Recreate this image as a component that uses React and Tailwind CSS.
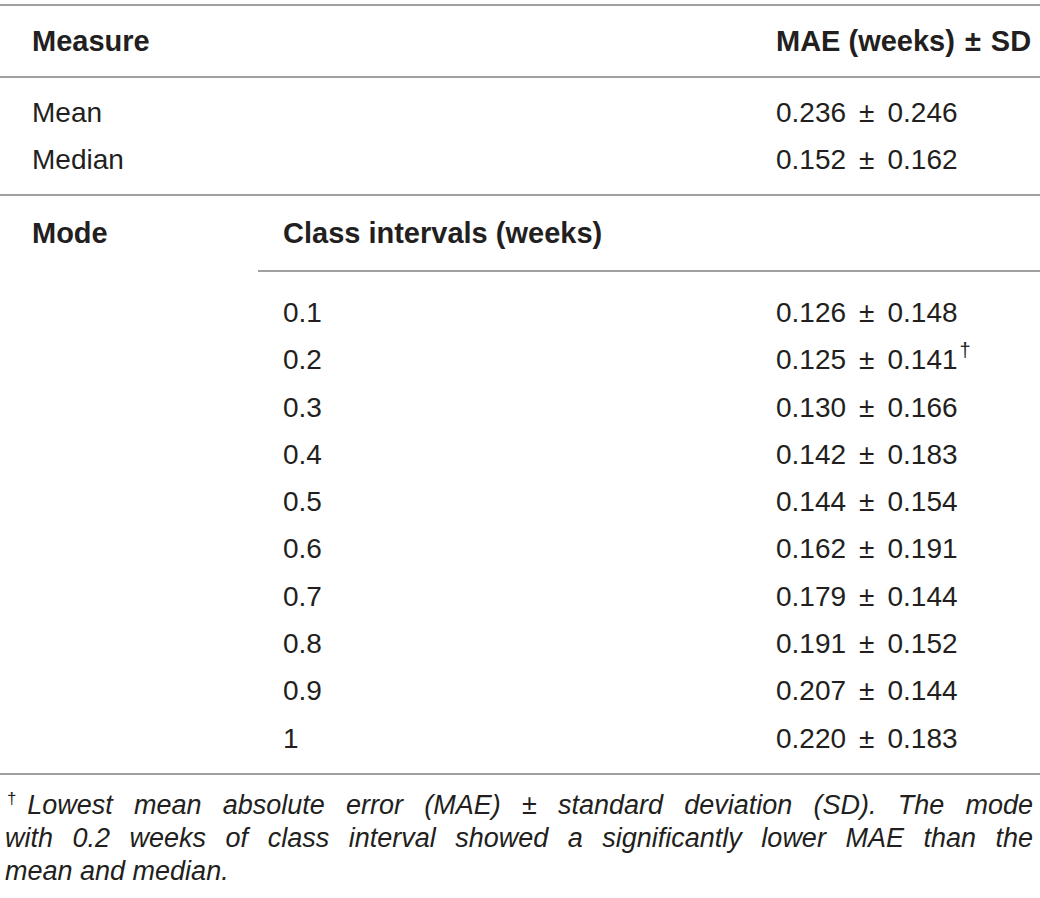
function PM({ v }) {
  const [a, b] = v.split(" ± ");
  return (
    <>
      {a}
      <span className="mx-[13px]">±</span>
      {b}
    </>
  );
}

export default function App() {
  const rows = [
    ["0.1", "0.126 ± 0.148", false],
    ["0.2", "0.125 ± 0.141", true],
    ["0.3", "0.130 ± 0.166", false],
    ["0.4", "0.142 ± 0.183", false],
    ["0.5", "0.144 ± 0.154", false],
    ["0.6", "0.162 ± 0.191", false],
    ["0.7", "0.179 ± 0.144", false],
    ["0.8", "0.191 ± 0.152", false],
    ["0.9", "0.207 ± 0.144", false],
    ["1", "0.220 ± 0.183", false],
  ];
  return (
    <div
      className="w-[1040px] bg-white text-[#231f20] pt-[4px]"
      style={{ fontFamily: '"Liberation Sans", Arial, sans-serif' }}
    >
      <div className="border-t-2 border-[#a0a0a0]" />
      {/* Header */}
      <div className="grid grid-cols-[258px_518px_1fr] h-[70px] items-center font-bold text-[29px]">
        <div className="pl-8 pt-[2px]">Measure</div>
        <div />
        <div className="pt-[2px] whitespace-nowrap">
          MAE (weeks)<span className="mx-[10px]">±</span>SD
        </div>
      </div>
      <div className="border-t-2 border-[#a0a0a0]" />
      <div className="py-[11px] text-[28px] leading-[47px]">
        <div className="grid grid-cols-[258px_518px_1fr]">
          <div className="pl-8">Mean</div>
          <div />
          <div><PM v="0.236 ± 0.246" /></div>
        </div>
        <div className="grid grid-cols-[258px_518px_1fr]">
          <div className="pl-8">Median</div>
          <div />
          <div><PM v="0.152 ± 0.162" /></div>
        </div>
      </div>
      <div className="border-t-2 border-[#a0a0a0]" />
      <div className="grid grid-cols-[258px_1fr]">
        <div className="pl-8 pt-[21px] font-bold text-[29px] leading-[32px]">Mode</div>
        <div>
          <div className="h-[76px] pl-[25px] pt-[21px] font-bold text-[29px] leading-[32px] border-b-2 border-[#a0a0a0]">
            Class intervals (weeks)
          </div>
          <div className="pt-[17px] pb-[11px] text-[28px] leading-[47.3px]">
            {rows.map(([a, b, dag]) => (
              <div key={a} className="grid grid-cols-[518px_1fr] h-[47.3px]">
                <div className="pl-[25px]">{a}</div>
                <div className="whitespace-nowrap">
                  <PM v={b} />
                  {dag && (
                    <span className="text-[20px] leading-[0] relative -top-[12px] ml-[2px]">†</span>
                  )}
                </div>
              </div>
            ))}
          </div>
        </div>
      </div>
      <div className="border-t-2 border-[#a0a0a0]" />
      <div className="pt-[14px] pl-[5px] pr-[7px] italic text-[27px] leading-[33px] text-[#231f20]">
        <div className="text-justify [text-align-last:justify]">
          <span className="not-italic text-[17px] leading-[0] relative -top-[10px] ml-[2px] -mr-[3px]">†</span>Lowest mean absolute error (MAE) ± standard deviation (SD). The mode
        </div>
        <div className="text-justify [text-align-last:justify]">
          with 0.2 weeks of class interval showed a significantly lower MAE than the
        </div>
        <div>mean and median.</div>
      </div>
    </div>
  );
}
